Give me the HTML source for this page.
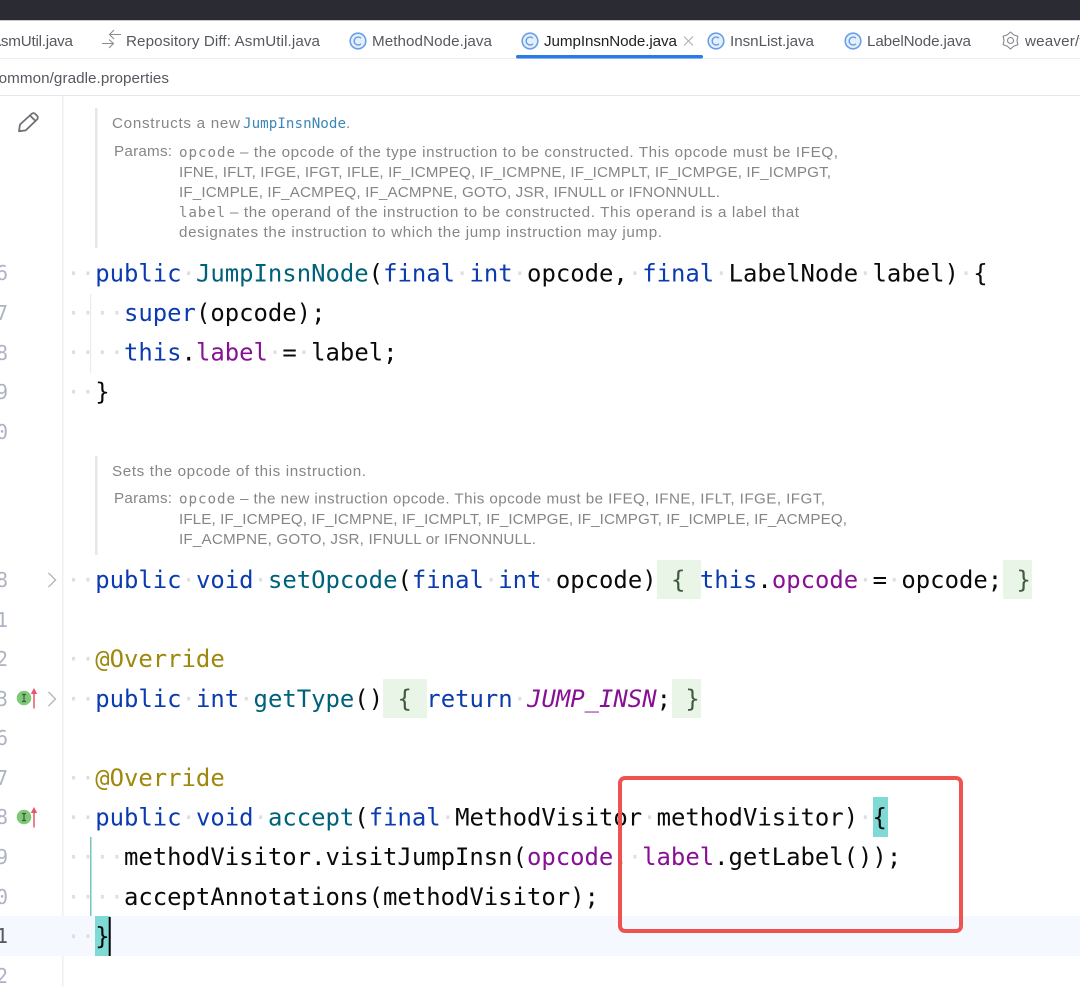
<!DOCTYPE html>
<html><head><meta charset="utf-8"><style>
html,body{margin:0;padding:0;background:#fff;width:1080px;height:987px;overflow:hidden}
svg{display:block;position:absolute;left:0;top:0}
text{white-space:pre}
.s{font-family:"Liberation Sans",sans-serif}
.tab{font-size:15.2px;fill:#55585f}
.doc{font-size:15.2px;fill:#868686}
.dm{font-family:"DejaVu Sans Mono",monospace;font-size:14.2px;fill:#868686}
.c{font-family:"DejaVu Sans Mono",monospace;font-size:23.92px;fill:#0a0a0a}
.n{font-family:"DejaVu Sans Mono",monospace;font-size:20px;fill:#aeb3c2}
.w{fill:#dedede}.k{fill:#0b3bb0}.m{fill:#00627a}.f{fill:#871094}.a{fill:#9e880d}.g{fill:#3f5a3f}
</style></head><body>
<svg width="1080" height="987" viewBox="0 0 1080 987" xmlns="http://www.w3.org/2000/svg">
<rect width="1080" height="987" fill="#fff"/>
<rect width="1080" height="20" fill="#2b2c33"/>
<rect y="20" width="1080" height="1" fill="#c9cacd"/>
<rect y="58" width="1080" height="1" fill="#ebecf0"/>
<rect y="95" width="1080" height="1" fill="#e6e7ea"/>
<rect x="62" y="96" width="1.5" height="891" fill="#eeeff2"/>
<rect y="916" width="1080" height="40" fill="#f5f8fe"/>
<rect x="516" y="55" width="187" height="3.5" rx="1.7" fill="#2a7be6"/>

<text class="s tab" x="-9" y="46" textLength="82">AsmUtil.java</text>
<text class="s tab" x="126" y="46" textLength="194">Repository Diff: AsmUtil.java</text>
<text class="s tab" x="372" y="46" textLength="120">MethodNode.java</text>
<text class="s tab" x="544" y="46" textLength="133" style="fill:#1e1f22">JumpInsnNode.java</text>
<text class="s tab" x="730" y="46" textLength="84">InsnList.java</text>
<text class="s tab" x="867" y="46" textLength="104">LabelNode.java</text>
<text class="s tab" x="1025" y="46" textLength="62">weaver/v</text>
<text class="s tab" x="-9" y="83" textLength="178">common/gradle.properties</text>

<g fill="none" stroke="#b0b0b4" stroke-width="1.1"><path d="M684 36.500l9 9M693 36.500l-9 9"/></g>
<g fill="none" stroke="#8a8d93" stroke-width="1.1"><path d="M121 34.500h-11M114 30l-4.500 4.500 4.500 4.500"/><path d="M102 43.500h11M109 39.500l4.500 4-4.500 4.500"/></g>
<g fill="#e4effc" stroke="#6a9fe8" stroke-width="1.6">
<circle cx="358" cy="41" r="7.800"/><circle cx="530" cy="41" r="7.800"/><circle cx="716" cy="41" r="7.800"/><circle cx="853" cy="41" r="7.800"/></g>
<g fill="none" stroke="#5f95e2" stroke-width="1.3">
<path d="M361 38.200a4 4 0 1 0 0 5.600"/><path d="M533 38.200a4 4 0 1 0 0 5.600"/><path d="M719 38.200a4 4 0 1 0 0 5.600"/><path d="M856 38.200a4 4 0 1 0 0 5.600"/></g>
<g fill="none" stroke="#85878d" stroke-width="1.1" stroke-linejoin="round"><path d="M1010.500 32L1013.750 34.870L1017.860 36.250L1017 40.500L1017.860 44.750L1013.750 46.130L1010.500 49L1007.250 46.130L1003.140 44.750L1004 40.500L1003.140 36.250L1007.250 34.870Z"/><circle cx="1010.500" cy="40.500" r="3"/></g>

<path d="M19 131.200l1-6.700L31.500 114c1.200-1.100 2.700-1.100 3.800 0l1.700 1.700c1.100 1.100 1.100 2.700 0 3.800L25.700 130.400zM30 115.500l5.500 5.500" fill="none" stroke="#6f7176" stroke-width="1.800" stroke-linejoin="round"/>

<rect x="95" y="108" width="2.500" height="140" fill="#e7e7e7"/>
<text class="s doc" x="112" y="128" textLength="128">Constructs a new</text>
<text class="dm" x="243" y="128" textLength="103" style="fill:#3d87b8">JumpInsnNode</text>
<text class="s doc" x="346" y="128">.</text>
<text class="s doc" x="114" y="156" textLength="58">Params:</text>
<text class="dm" x="179" y="157" textLength="56">opcode</text>
<text class="s doc" x="240" y="157" textLength="598">– the opcode of the type instruction to be constructed. This opcode must be IFEQ,</text>
<text class="s doc" x="179" y="177" textLength="652">IFNE, IFLT, IFGE, IFGT, IFLE, IF_ICMPEQ, IF_ICMPNE, IF_ICMPLT, IF_ICMPGE, IF_ICMPGT,</text>
<text class="s doc" x="179" y="197" textLength="541">IF_ICMPLE, IF_ACMPEQ, IF_ACMPNE, GOTO, JSR, IFNULL or IFNONNULL.</text>
<text class="dm" x="179" y="217" textLength="46">label</text>
<text class="s doc" x="230" y="217" textLength="569">– the operand of the instruction to be constructed. This operand is a label that</text>
<text class="s doc" x="179" y="237" textLength="483">designates the instruction to which the jump instruction may jump.</text>

<rect x="95" y="456" width="2.500" height="99" fill="#e7e7e7"/>
<text class="s doc" x="112" y="476" textLength="254">Sets the opcode of this instruction.</text>
<text class="s doc" x="114" y="503" textLength="58">Params:</text>
<text class="dm" x="179" y="503.500" textLength="56">opcode</text>
<text class="s doc" x="240" y="503.500" textLength="585">– the new instruction opcode. This opcode must be IFEQ, IFNE, IFLT, IFGE, IFGT,</text>
<text class="s doc" x="179" y="524" textLength="668">IFLE, IF_ICMPEQ, IF_ICMPNE, IF_ICMPLT, IF_ICMPGE, IF_ICMPGT, IF_ICMPLE, IF_ACMPEQ,</text>
<text class="s doc" x="179" y="544" textLength="357">IF_ACMPNE, GOTO, JSR, IFNULL or IFNONNULL.</text>

<g fill="#e9f5e6">
<rect x="657" y="560" width="44" height="39"/><rect x="1003" y="560" width="29" height="39"/>
<rect x="383" y="679" width="44" height="39"/><rect x="672" y="679" width="29" height="39"/>
</g>
<g fill="#7fdad6"><rect x="873" y="797" width="15" height="40"/><rect x="95" y="916" width="15" height="40"/></g>
<rect x="90" y="294" width="1.200" height="79" fill="#ececec"/>
<rect x="90" y="837" width="1.500" height="79" fill="#78c4bd"/>

<g>
<text class="n" x="-4" y="280">6</text><text class="n" x="-4" y="320">7</text><text class="n" x="-4" y="360">8</text><text class="n" x="-4" y="399">9</text><text class="n" x="-4" y="439">0</text>
<text class="n" x="-4" y="587">8</text><text class="n" x="-4" y="627">1</text><text class="n" x="-4" y="666">2</text><text class="n" x="-4" y="706">3</text><text class="n" x="-4" y="745">6</text><text class="n" x="-4" y="785">7</text><text class="n" x="-4" y="824">8</text><text class="n" x="-4" y="864">9</text><text class="n" x="-4" y="904">0</text><text class="n" x="-4" y="943" style="fill:#55585f">1</text><text class="n" x="-4" y="983">2</text>
</g>
<g fill="none" stroke="#b4b6bb" stroke-width="1.400"><path d="M48.500 573l7 7-7 7"/><path d="M48.500 692l7 7-7 7"/></g>
<g>
<circle cx="24" cy="698" r="7.300" fill="#7fc878"/><path d="M22 694.500h4M24 694.500v7M22 701.500h4" stroke="#3f5a3f" stroke-width="1.200" fill="none"/>
<circle cx="24" cy="817" r="7.300" fill="#7fc878"/><path d="M22 813.500h4M24 813.500v7M22 820.500h4" stroke="#3f5a3f" stroke-width="1.200" fill="none"/>
<path d="M34 708.500v-16" stroke="#e8566a" stroke-width="1.500" fill="none"/><path d="M30.800 694l3.200-6 3.200 6z" fill="#e8566a"/>
<path d="M34 827.500v-16" stroke="#e8566a" stroke-width="1.500" fill="none"/><path d="M30.800 813l3.200-6 3.200 6z" fill="#e8566a"/>
</g>

<text class="c" x="66.400" y="281.500"><tspan class="w">··</tspan><tspan class="k">public</tspan><tspan class="w">·</tspan><tspan class="m">JumpInsnNode</tspan>(<tspan class="k">final</tspan><tspan class="w">·</tspan><tspan class="k">int</tspan><tspan class="w">·</tspan>opcode,<tspan class="w">·</tspan><tspan class="k">final</tspan><tspan class="w">·</tspan>LabelNode<tspan class="w">·</tspan>label)<tspan class="w">·</tspan>{</text>
<text class="c" x="66.400" y="321"><tspan class="w">····</tspan><tspan class="k">super</tspan>(opcode);</text>
<text class="c" x="66.400" y="360.700"><tspan class="w">····</tspan><tspan class="k">this</tspan>.<tspan class="f">label</tspan><tspan class="w">·</tspan>=<tspan class="w">·</tspan>label;</text>
<text class="c" x="66.400" y="400"><tspan class="w">··</tspan>}</text>
<text class="c" x="66.400" y="588"><tspan class="w">··</tspan><tspan class="k">public</tspan><tspan class="w">·</tspan><tspan class="k">void</tspan><tspan class="w">·</tspan><tspan class="m">setOpcode</tspan>(<tspan class="k">final</tspan><tspan class="w">·</tspan><tspan class="k">int</tspan><tspan class="w">·</tspan>opcode) <tspan class="g">{</tspan> <tspan class="k">this</tspan>.<tspan class="f">opcode</tspan><tspan class="w">·</tspan>=<tspan class="w">·</tspan>opcode; <tspan class="g">}</tspan></text>
<text class="c" x="66.400" y="667"><tspan class="w">··</tspan><tspan class="a">@Override</tspan></text>
<text class="c" x="66.400" y="707"><tspan class="w">··</tspan><tspan class="k">public</tspan><tspan class="w">·</tspan><tspan class="k">int</tspan><tspan class="w">·</tspan><tspan class="m">getType</tspan>() <tspan class="g">{</tspan> <tspan class="k">return</tspan><tspan class="w">·</tspan><tspan class="f" font-style="italic">JUMP_INSN</tspan>; <tspan class="g">}</tspan></text>
<text class="c" x="66.400" y="786"><tspan class="w">··</tspan><tspan class="a">@Override</tspan></text>
<text class="c" x="66.400" y="825.500"><tspan class="w">··</tspan><tspan class="k">public</tspan><tspan class="w">·</tspan><tspan class="k">void</tspan><tspan class="w">·</tspan><tspan class="m">accept</tspan>(<tspan class="k">final</tspan><tspan class="w">·</tspan>MethodVisitor<tspan class="w">·</tspan>methodVisitor)<tspan class="w">·</tspan>{</text>
<text class="c" x="66.400" y="865.200"><tspan class="w">····</tspan>methodVisitor.visitJumpInsn(<tspan class="f">opcode</tspan>,<tspan class="w">·</tspan><tspan class="f">label</tspan>.getLabel());</text>
<text class="c" x="66.400" y="905"><tspan class="w">····</tspan>acceptAnnotations(methodVisitor);</text>
<text class="c" x="66.400" y="944.500"><tspan class="w">··</tspan>}</text>
<rect x="108.700" y="917" width="2" height="39" fill="#000"/>

<rect x="620" y="778" width="341" height="153" rx="5" fill="none" stroke="#ef5350" stroke-width="4"/>
</svg>
</body></html>
